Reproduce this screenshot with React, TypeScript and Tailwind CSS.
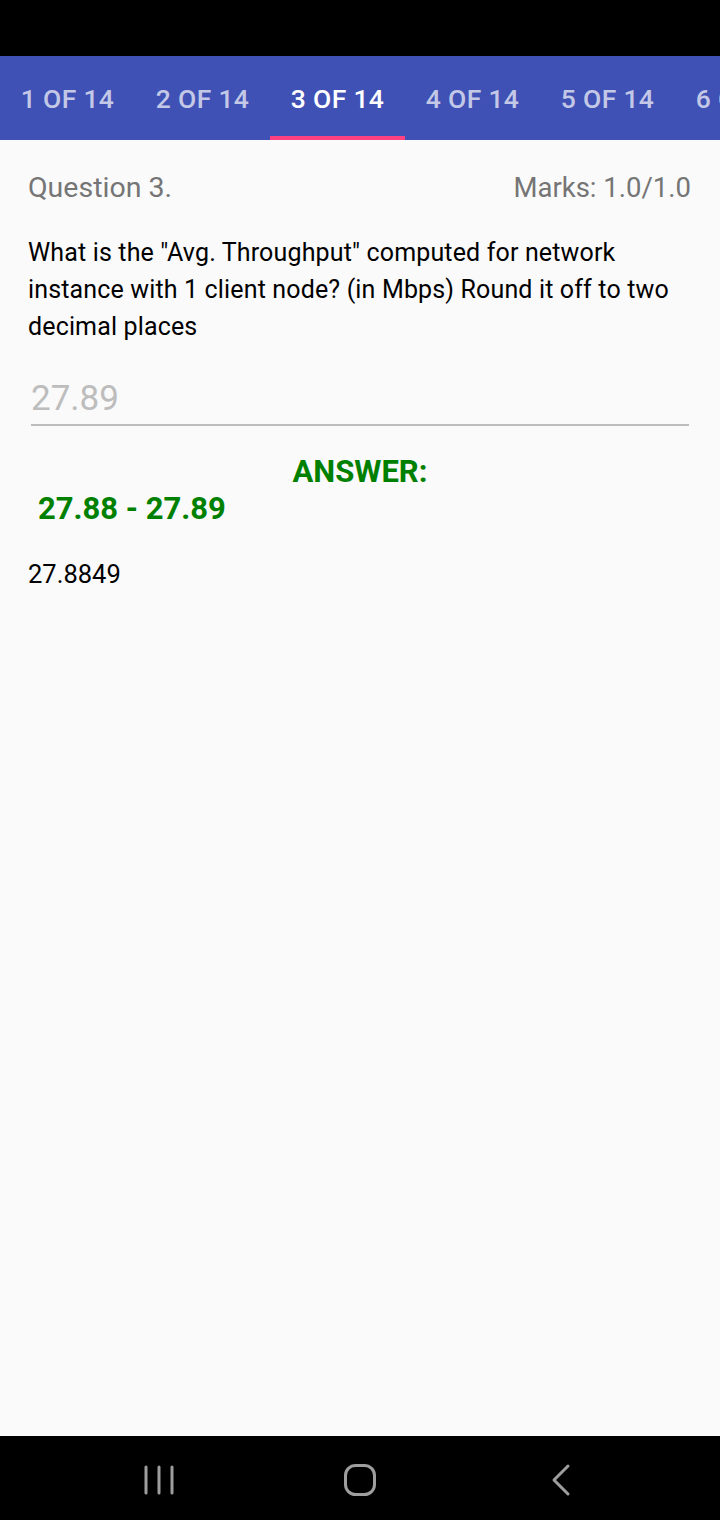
import React from 'react';

const tabs = ['1 OF 14', '2 OF 14', '3 OF 14', '4 OF 14', '5 OF 14', '6 OF 14'];

const App: React.FC = () => {
    const active = 2;
    return (
        <div className="w-[720px] h-[1520px] flex flex-col bg-[#fafafa] overflow-hidden" style={{ fontFamily: 'Roboto, "Noto Sans", sans-serif' }}>
            <div className="h-[56px] bg-black shrink-0"></div>
            <div className="h-[84px] bg-[#3f51b5] flex shrink-0 overflow-hidden">
                {tabs.map((t, i) => (
                    <div key={t} className="relative w-[135px] shrink-0 flex items-center justify-center pt-[2px]">
                        <span className={`text-[26.5px] font-medium tracking-[0.3px] whitespace-nowrap ${i === active ? 'text-white' : 'text-white/70'}`}>{t}</span>
                        {i === active && <div className="absolute bottom-0 left-0 right-0 h-[4px] bg-[#ff4081]"></div>}
                    </div>
                ))}
            </div>
            <div className="flex-1 px-[28px]">
                <div className="flex justify-between items-center mt-[30px] pr-[1px]">
                    <span className="text-[28.5px] leading-[36px] text-[#757575]">Question 3.</span>
                    <span className="text-[27.5px] leading-[36px] text-[#757575]">Marks: 1.0/1.0</span>
                </div>
                <p className="mt-[28px] text-[25px] leading-[37px] tracking-[0.15px] text-black">
                    What is the "Avg. Throughput" computed for network instance with 1 client node? (in Mbps) Round it off to two decimal places
                </p>
                <div className="mt-[34px] mx-[3px] border-b-2 border-[#bdbdbd] pb-[5px]">
                    <span className="text-[35px] leading-[40px] text-[#bdbdbd]">27.89</span>
                </div>
                <div className="mt-[28px] text-center text-[31px] leading-[36px] font-bold text-[#008000]">ANSWER:</div>
                <div className="pl-[10px] mt-[1px] text-[31px] leading-[36px] font-bold text-[#008000]">27.88 - 27.89</div>
                <div className="mt-[32px] text-[25.5px] leading-[30px] text-black">27.8849</div>
            </div>
            <div className="h-[84px] bg-black shrink-0 flex items-center justify-center gap-[161px] pt-[4px]">
                <svg width="40" height="40" viewBox="0 0 40 40">
                    <g stroke="#9e9e9e" strokeWidth="3" strokeLinecap="round">
                        <line x1="7" y1="7" x2="7" y2="33" />
                        <line x1="20" y1="7" x2="20" y2="33" />
                        <line x1="33" y1="7" x2="33" y2="33" />
                    </g>
                </svg>
                <svg width="40" height="40" viewBox="0 0 40 40">
                    <rect x="5.5" y="5.5" width="29" height="29" rx="10" fill="none" stroke="#9e9e9e" strokeWidth="3" />
                </svg>
                <svg width="40" height="40" viewBox="0 0 40 40">
                    <polyline points="27,6 13,20 27,34" fill="none" stroke="#9e9e9e" strokeWidth="3" strokeLinecap="round" strokeLinejoin="round" />
                </svg>
            </div>
        </div>
    );
};

export default App;
